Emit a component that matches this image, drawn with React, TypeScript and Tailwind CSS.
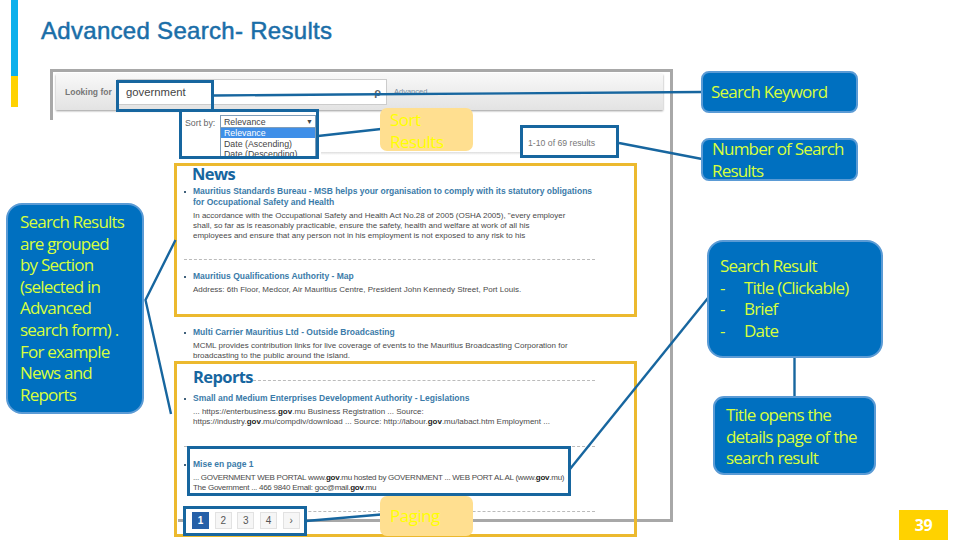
/**
 * Slide "Advanced Search- Results": an annotated screenshot with callouts.
 * The slide is a free canvas, so frames and callouts sit at absolute places;
 * the result list inside the screenshot runs in normal flow.
 */
import type { ReactNode } from 'react'

const CALLOUT =
  "absolute z-30 border-2 border-[#5b9bd5] bg-[#0070c0] font-['Open_Sans',sans-serif] text-[17px] leading-[21.6px] tracking-[-0.8px] text-[#d8ff3c]"
const NOTE =
  "absolute z-30 rounded-[7px] bg-[#ffdf90] font-['Open_Sans',sans-serif] text-[17px] leading-[22px] tracking-[-0.5px] text-[#ffff00]"
const BLUE_BOX = 'absolute z-20 border-[3px] border-[#17669f]'
const GOLD_BOX = 'absolute z-10 border-[3px] border-[#ecb92e]'
const HEADING = "font-['Open_Sans',sans-serif] text-[16.5px] leading-[19px] font-bold tracking-[-0.6px] text-[#17669f]"
const DASH = 'border-b border-dashed border-[#bbb]'

interface ResultProps {
  title: ReactNode
  className: string
  snippetClass?: string
  children: ReactNode
}

function Result({ title, className, snippetClass = '', children }: ResultProps) {
  return (
    <div className={className}>
      <div className="flex gap-[7px]">
        <span className="mt-[5px] h-[2px] w-[2px] shrink-0 bg-[#40627c]" />
        <p className="text-[8.5px] leading-[11px] font-bold whitespace-pre text-[#3b7ba9]">{title}</p>
      </div>
      <p className={`mt-[3px] ml-[9px] text-[8px] leading-[10px] whitespace-pre text-[#4a4a4a] ${snippetClass}`}>{children}</p>
    </div>
  )
}

function Gov() {
  return <b className="text-[#222]">gov</b>
}

function Pager() {
  return (
    <div className="relative -mt-[1px] flex h-[24px] w-[122px] gap-[5.7px] bg-white pt-[1px] pl-[8px] text-[10px] text-[#555]">
      <span className="flex h-[17px] w-[17px] items-center justify-center bg-[#2660a8] font-bold text-white">1</span>
      {['2', '3', '4', '›'].map((p) => (
        <span key={p} className="flex h-[17px] w-[17px] items-center justify-center border border-[#e2e2e2] bg-[#f6f6f6]">
          {p}
        </span>
      ))}
    </div>
  )
}

function ResultList() {
  return (
    <div className="absolute top-[164px] left-[184px] z-[5] flex w-[411px] flex-col font-['Liberation_Sans',sans-serif]">
      <h2 className={`ml-[8px] h-[22px] ${HEADING}`}>News</h2>
      <Result
        className={`h-[74px] ${DASH}`}
        title={'Mauritius Standards Bureau - MSB helps your organisation to comply with its statutory obligations\nfor Occupational Safety and Health'}
      >
        {'In accordance with the Occupational Safety and Health Act No.28 of 2005 (OSHA 2005), "every employer\nshall, so far as is reasonably practicable, ensure the safety, health and welfare at work of all his\nemployees and ensure that any person not in his employment is not exposed to any risk to his'}
      </Result>
      <Result className="mt-[11px] h-[55px]" title="Mauritius Qualifications Authority - Map">
        Address: 6th Floor, Medcor, Air Mauritius Centre, President John Kennedy Street, Port Louis.
      </Result>
      <Result className="h-[41px] pt-[1px]" title="Multi Carrier Mauritius Ltd - Outside Broadcasting">
        {'MCML provides contribution links for live coverage of events to the Mauritius Broadcasting Corporation for\nbroadcasting to the public around the island.'}
      </Result>
      <div className="flex h-[24px] items-start">
        <h2 className={`ml-[9px] shrink-0 ${HEADING}`}>Reports</h2>
        <span className={`mt-[13px] flex-1 ${DASH}`} />
      </div>
      <Result className={`h-[56px] pt-[2px] ${DASH}`} title="Small and Medium Enterprises Development Authority - Legislations">
        <>
          {'... https://enterbusiness.'}
          <Gov />
          {'.mu Business Registration ... Source:\nhttps://industry.'}
          <Gov />
          {'.mu/compdiv/download ... Source: http://labour.'}
          <Gov />
          .mu/labact.htm Employment ...
        </>
      </Result>
      <Result className={`mt-[12px] h-[53px] ${DASH}`} snippetClass="tracking-[-0.27px]" title="Mise en page 1">
        <>
          {'... GOVERNMENT WEB PORTAL www.'}
          <Gov />
          {'.mu hosted by GOVERNMENT ... WEB PORT AL AL (www.'}
          <Gov />
          {'.mu)\nThe Government ... 466 9840 Email: goc@mail.'}
          <Gov />
          .mu
        </>
      </Result>
      <Pager />
    </div>
  )
}

function SearchBar() {
  return (
    <div className="absolute top-[74px] left-[56px] z-[5] flex h-[36px] w-[607px] items-center bg-gradient-to-b from-[#f8f8f8] to-[#e3e3e3] font-['Liberation_Sans',sans-serif] shadow-[0_1px_2px_#999]">
      <span className="ml-[9px] w-[52px] text-[8.5px] font-bold whitespace-nowrap text-[#777]">Looking for</span>
      <div className="flex h-[26px] w-[270px] items-center justify-between border border-[#ccc] bg-white pr-[5px] pl-[8px] text-[11.3px] text-[#444]">
        government
        <span className="text-[11px] font-bold text-[#666]">ρ</span>
      </div>
      <span className="ml-[7px] text-[7.5px] text-[#7a8ea0]">Advanced</span>
    </div>
  )
}

function SortBy() {
  return (
    <div className={`${BLUE_BOX} top-[109px] left-[179px] flex h-[50px] w-[140px] overflow-hidden bg-white pt-[3px] pl-[3px] font-['Liberation_Sans',sans-serif] text-[8.8px] leading-[10px] text-[#444]`}>
      <span className="mt-[3px] w-[35px] whitespace-nowrap text-[#666]">Sort by:</span>
      <div className="w-[96px] border-x border-[#7f9db9]">
        <div className="flex h-[13px] items-center justify-between border-y border-[#7f9db9] pr-[2px] pl-[3px]">
          Relevance <span className="text-[7px]">▼</span>
        </div>
        <div className="h-[10px] bg-[#3f8fe8] pl-[3px] text-white">Relevance</div>
        <div className="mt-[1px] h-[10px] pl-[3px]">Date (Ascending)</div>
        <div className="h-[10px] pl-[3px]">Date (Descending)</div>
      </div>
    </div>
  )
}

export default function App() {
  return (
    <div className="relative h-[540px] w-[960px] overflow-hidden bg-white">
      {/* accent bar */}
      <div className="absolute top-0 left-[11px] flex h-[107px] w-[7px] flex-col">
        <div className="h-[76px] bg-[#0cb0ec]" />
        <div className="flex-1 bg-[#ffd200]" />
      </div>

      <h1 className="absolute top-[16px] left-[41px] font-['Liberation_Sans',sans-serif] text-[24px] leading-[30px] tracking-[0.3px] text-[#1a6ea8] [-webkit-text-stroke:0.5px_#1a6ea8]">
        Advanced Search- Results
      </h1>

      {/* screenshot frame, left side cut away below the search bar */}
      <div className="absolute top-[69px] left-[50px] h-[453px] w-[623px] border-[3px] border-[#a8a8a8]">
        <div className="absolute top-[48px] -left-[3px] h-[405px] w-[128px] bg-white" />
        <div className="absolute top-[80px] left-[268px] h-[3px] w-[200px] bg-gradient-to-b from-[#ddd] to-white" />
      </div>

      <SearchBar />
      <ResultList />

      <div className="absolute top-[138px] left-[528px] z-20 font-['Liberation_Sans',sans-serif] text-[8.7px] leading-[10px] text-[#777]">
        1-10 of 69 results
      </div>

      <div className={`${BLUE_BOX} top-[80px] left-[116px] h-[32px] w-[98px]`} />
      <SortBy />
      <div className={`${BLUE_BOX} top-[125px] left-[520px] h-[33px] w-[99px]`} />
      <div className={`${BLUE_BOX} top-[446px] left-[187px] h-[50px] w-[384px]`} />
      <div className={`${BLUE_BOX} top-[506px] left-[183px] h-[30px] w-[124px]`} />

      <div className={`${GOLD_BOX} top-[163px] left-[174px] h-[154px] w-[463px]`} />
      <div className={`${GOLD_BOX} top-[361px] left-[174px] h-[176px] w-[463px]`} />

      {/* connector lines */}
      <svg className="absolute inset-0 z-20" width="960" height="540" fill="none" stroke="#17669f" strokeWidth="2.4">
        <path d="M214 95.5 L340 94.5 L702 92" />
        <path d="M318 136 L381 129" />
        <path d="M619 143 L702 159" />
        <path d="M175.5 240 L145.5 300 L171 414" />
        <path d="M570 469 L708 298" />
        <path d="M794.5 357 V397" />
        <path d="M306 521 L381 514.5" />
      </svg>

      <div className={`${NOTE} top-[108px] left-[380px] h-[43px] w-[93px] pt-[1px] pl-[10px]`}>
        Sort
        <br />
        Results
      </div>
      <div className={`${NOTE} top-[496px] left-[380px] flex h-[40px] w-[93px] items-center pl-[10px]`}>Paging</div>

      <div className={`${CALLOUT} top-[71px] left-[701px] flex h-[42px] w-[157px] items-center rounded-[8px] pl-[8px]`}>
        Search Keyword
      </div>
      <div className={`${CALLOUT} top-[138px] left-[701px] h-[43px] w-[157px] overflow-hidden rounded-[8px] pl-[9px] leading-[21.6px]`}>
        <div className="-mt-[2px]">
          Number of Search
          <br />
          Results
        </div>
      </div>
      <div className={`${CALLOUT} top-[240px] left-[707px] h-[118px] w-[176px] rounded-[16px] pt-[13px] pl-[11px]`}>
        <p>Search Result</p>
        {['Title (Clickable)', 'Brief', 'Date'].map((item) => (
          <p key={item} className="flex">
            <span className="w-[24px]">-</span>
            {item}
          </p>
        ))}
      </div>
      <div className={`${CALLOUT} top-[396px] left-[713px] h-[79px] w-[163px] rounded-[11px] pt-[6px] pl-[11px]`}>
        Title opens the
        <br />
        details page of the
        <br />
        search result
      </div>
      <div className={`${CALLOUT} top-[203px] left-[6px] h-[211px] w-[138px] rounded-[16px] pt-[6px] pl-[12px]`}>
        Search Results
        <br />
        are grouped
        <br />
        by Section
        <br />
        (selected in
        <br />
        Advanced
        <br />
        search form) .
        <br />
        For example
        <br />
        News and
        <br />
        Reports
      </div>

      <div className="absolute top-[510px] left-[899px] flex h-[30px] w-[49px] items-center justify-center bg-[#ffd200] font-['Open_Sans',sans-serif] text-[16px] font-bold tracking-[-0.5px] text-white">
        39
      </div>
    </div>
  )
}
